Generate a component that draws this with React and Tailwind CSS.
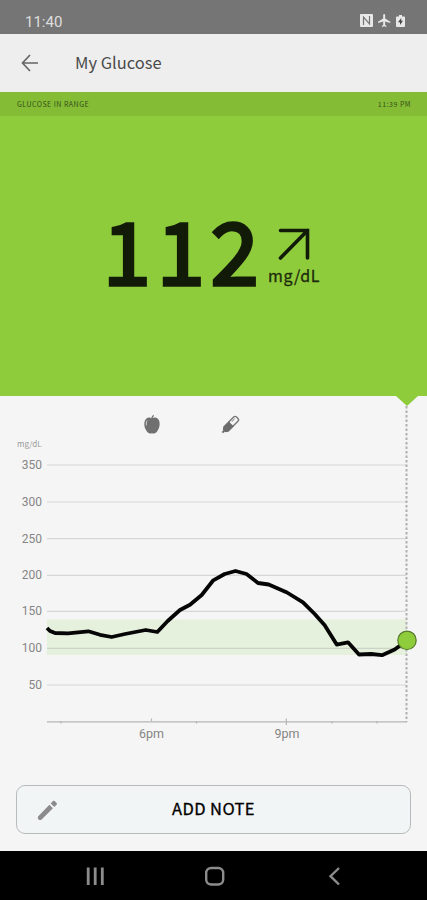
import React from 'react';

const TOP = 396;

// [level, y] for each horizontal grid line
const gridLines = [
  [350, 465],
  [300, 502],
  [250, 538.7],
  [200, 575.3],
  [150, 611.3],
  [100, 648.3],
  [50, 685],
];

const readings = [
  [47, 628], [50, 631], [55, 633], [68, 633.3], [88.3, 631.3], [100, 634.8], [111.7, 637],
  [125, 634], [145.7, 630], [157.3, 632], [167.7, 621], [180, 610], [190, 604.7],
  [201.7, 595], [213.3, 580.3], [224.7, 574], [235.5, 571], [246.5, 574], [258, 583],
  [268.7, 584.5], [287, 592.5], [303, 602.3], [314.7, 614], [324.7, 625.3], [336.7, 644.6],
  [348, 642.3], [359, 654.5], [371.3, 654], [382, 655.2], [394.7, 649.5], [407, 640.5],
];

const StatusBar = () => (
  <div className="h-[34px] bg-[#757575] flex items-end justify-between pl-[25px] pr-[22px] pb-[5px]">
    <span className="font-[Roboto] text-[15px] leading-[14px] text-[#dedede]">11:40</span>
    <div className="flex items-center gap-[5px] pb-[2px] text-[#e8e8e8]">
      <svg width="13" height="13" viewBox="0 0 13 13">
        <rect width="13" height="13" rx="1" fill="currentColor" />
        <path d="M3.500 11V3L9.500 10V2" fill="none" stroke="#757575" strokeWidth="1.200" />
      </svg>
      <svg width="13" height="13" viewBox="2 2 20 20" fill="currentColor">
        <path d="M21 16v-2l-8-5V3.500a1.500 1.500 0 0 0-3 0V9l-8 5v2l8-2.500V19l-2 1.500V22l3.500-1 3.500 1v-1.500L13 19v-5.500z" />
      </svg>
      <svg width="9" height="12" viewBox="0 0 9 12">
        <path d="M1 1.500h2V0h3v1.500h2a1 1 0 0 1 1 1V11a1 1 0 0 1-1 1H1a1 1 0 0 1-1-1V2.500a1 1 0 0 1 1-1z" fill="currentColor" />
        <path d="M5.200 3L2 7.300h2v2.700l3-4.300H5.200z" fill="#444" />
      </svg>
    </div>
  </div>
);

const Header = () => (
  <header className="h-[58px] bg-[#eeeeee] flex items-center pl-[21px]">
    <svg width="18" height="18" viewBox="0 0 18 18" fill="none" stroke="#666" strokeWidth="1.7">
      <path d="M17 9H2M9 1L1.500 9L9 17" />
    </svg>
    <h1 className="ml-[36px] pb-[2px] text-[16.500px] leading-6 text-[#4a4a4a]">My Glucose</h1>
  </header>
);

const Reading = () => (
  <section className="h-[304px] bg-[#8fcc3c] flex flex-col">
    <div className="h-6 bg-[#84bc35] flex items-center justify-between pl-[17px] pr-4 text-[7px] text-[#34501a]">
      <span className="tracking-[0.500px]">GLUCOSE IN RANGE</span>
      <span className="tracking-[0.500px]">11:39 PM</span>
    </div>
    <div className="flex-1 flex pl-[103px] pt-[88px]">
      <span className="w-[160px] text-[86px] leading-[88px] text-[#121a08] tracking-[6.200px] [-webkit-text-stroke:3.500px_#121a08]">112</span>
      <div className="flex flex-col pl-[5px] pt-[22px]">
        <svg className="ml-[8px]" width="34" height="34" viewBox="0 0 34 34" fill="none" stroke="#121a08" strokeWidth="3.600" strokeLinecap="round">
          <path d="M4.500 4.500H31.500V32M31.500 4.500L4.500 32" />
        </svg>
        <span className="mt-[5px] text-[16px] leading-5 text-[#1d2b0c] tracking-[0.600px] [-webkit-text-stroke:0.300px_#1d2b0c]">mg/dL</span>
      </div>
    </div>
  </section>
);

const Chart = () => (
  <svg className="block" width="427" height="389" viewBox={`0 ${TOP} 427 389`}>
    <path d="M396 396H418L407 406z" fill="#8fcc3c" />

    {/* apple */}
    <g fill="#707070">
      <path d="M152 418.500c1.500-1.300 4-1.500 5.800.2 2.600 2.600 2.300 7.600.3 11.100-1.300 2.500-2.600 3.700-4.300 3.700-.8 0-1.100-.3-1.800-.3s-1 .3-1.800.3c-1.700 0-3-1.200-4.300-3.700-2-3.500-2.300-8.500.3-11.100 1.800-1.700 4.300-1.500 5.800-.2z" />
      <path d="M152 419.500c-.2-1.800.3-3.200 1.600-4.300" fill="none" stroke="#707070" strokeWidth="1.300" />
      <path d="M147.200 420.500c-1 1.500-1.200 3.500-.7 5" fill="none" stroke="#d5d5d5" strokeWidth="1" />
    </g>

    {/* insulin pen */}
    <g transform="translate(230.500 424.500) rotate(45)">
      <rect x="-3" y="-9.500" width="6" height="10" rx="2" fill="#f5f5f5" stroke="#777" strokeWidth="1.400" />
      <path d="M-1.200 -7V-3" stroke="#999" strokeWidth="1" />
      <path d="M-3.700 -1H3.700V6.500L1.800 9H-1.800L-3.700 6.500z" fill="#6c6c6c" />
      <path d="M0 8V11.500" stroke="#6c6c6c" strokeWidth="2" />
    </g>

    <text x="17" y="447" fontSize="8" fill="#999">mg/dL</text>

    <rect x="47" y="619.500" width="360" height="35.500" fill="#e6f1dd" />

    {gridLines.map(([level, y]) => (
      <g key={level}>
        <line x1="47" x2="406" y1={y} y2={y} stroke="#7f7f7f" strokeOpacity="0.250" strokeWidth="1.200" />
        <text x="42" y={y + 4} textAnchor="end" fontSize="12" fill="#858585" className="font-[Roboto]">{level}</text>
      </g>
    ))}

    <path d="M47 721.800H407M61 721V723.500M151.500 718.500V721M196.500 721V723.500M286.300 718.500V725M332 721V723.500M377 721V723.500" fill="none" stroke="#b5b5b5" strokeWidth="1.200" />
    <text x="151.500" y="737.500" textAnchor="middle" fontSize="12.500" fill="#858585" className="font-[Roboto]">6pm</text>
    <text x="287" y="737.500" textAnchor="middle" fontSize="12.500" fill="#858585" className="font-[Roboto]">9pm</text>

    <line x1="406.500" x2="406.500" y1="406" y2="722" stroke="#b0b0b0" strokeWidth="2" strokeDasharray="2.500 2" />
    <polyline points={readings.map((p) => p.join(',')).join(' ')} fill="none" stroke="#050505" strokeWidth="3.800" strokeLinejoin="round" />
    <circle cx="407" cy="640.300" r="9.200" fill="#8fcc3c" stroke="#557a2b" strokeWidth="1.200" />
  </svg>
);

const NavBar = () => (
  <nav className="h-[49px] bg-black text-[#8c8c8c]">
    <svg width="427" height="49" viewBox="0 0 427 49" fill="none" stroke="currentColor" strokeWidth="2.400">
      <path d="M88.200 16.500V34M95.200 16.500V34M102.300 16.500V34" strokeWidth="2.800" />
      <rect x="206.200" y="17" width="17" height="16.500" rx="5" />
      <path d="M339 17L330.500 25.200L339 33.500" />
    </svg>
  </nav>
);

const App = () => {
  return (
    <div className="w-[427px] h-[900px] overflow-hidden flex flex-col bg-[#f5f5f5] font-['Noto_Sans_CJK_JP',sans-serif]">
      <StatusBar />
      <Header />
      <Reading />
      <Chart />
      <div className="px-4 h-[66px]">
        <button className="w-full h-[49px] rounded-[9px] border-[1.500px] border-[#b8bbbb] bg-[#f1f5f6] flex items-center px-[19px]">
          <svg width="24" height="24" viewBox="0 0 24 24" fill="#8b8b8b">
            <path d="M2.300 18.300c-.6.600-.6 1.200-.3 2.200.2.700.7 1.200 1.400 1.400 1 .3 1.600.2 2.200-.4L16.900 10.300l-3.500-3.500zM20.600 6.700c.5-.5.5-1.100 0-1.600l-2-2c-.5-.5-1.100-.5-1.600 0l-2.300 2.300 3.600 3.600z" />
          </svg>
          <span className="flex-1 pr-[24px] pb-[3px] text-center text-[16.500px] leading-6 text-black tracking-[0.400px] [-webkit-text-stroke:0.300px_black]">ADD NOTE</span>
        </button>
      </div>
      <NavBar />
    </div>
  );
};

export default App;
